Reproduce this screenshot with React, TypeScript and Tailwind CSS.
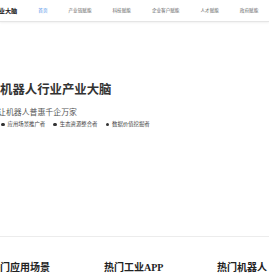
const navItems = ['首页', '产业链赋能', '科技赋能', '企业客户赋能', '人才赋能', '政府赋能'];

const roles = ['应用场景推广者', '生态资源整合者', '数据价值挖掘者'];

const sections = ['热门应用场景', '热门工业APP', '热门机器人'];

export default function App() {
  return (
    <div className="w-[269px] h-[274px] overflow-hidden bg-white font-['Noto_Sans_CJK_SC',sans-serif]">
      <header className="h-[22px] flex items-center border-b border-[#e5e5e5] shadow-[0_1px_2px_rgba(0,0,0,0.06)]">
        <div className="ml-[-26px] text-[6.2px] font-bold text-[#222] whitespace-nowrap">机器人产业大脑</div>
        <nav className="ml-[21px] flex gap-[21px] text-[4.6px] text-[#666] whitespace-nowrap">
          {navItems.map((item, i) => (
            <span key={item} className={i === 0 ? 'text-[#4a8ee8]' : ''}>
              {item}
            </span>
          ))}
        </nav>
      </header>

      <section className="h-[215px] border-b border-[#ececec] pt-[59px]">
        <h1 className="text-[12.4px] font-bold text-[#333] leading-[16px] whitespace-nowrap">机器人行业产业大脑</h1>
        <p className="mt-[10px] ml-[-2px] text-[7.9px] text-[#555] leading-[10px] whitespace-nowrap">让机器人普惠千企万家</p>
        <ul className="mt-[4px] ml-[1px] flex gap-[8px] text-[5.4px] text-[#444] leading-[7px] whitespace-nowrap">
          {roles.map((r) => (
            <li key={r} className="flex items-center gap-[3px]">
              <span className="w-[3.5px] h-[3.5px] rounded-full bg-[#333]" />
              {r}
            </li>
          ))}
        </ul>
      </section>

      <div className="ml-[-10px] mt-[25px] grid grid-cols-[114px_113px_113px] font-['Liberation_Serif','Noto_Sans_CJK_SC',serif] text-[10px] font-bold text-[#222] leading-[12px] whitespace-nowrap">
        {sections.map((s) => (
          <h2 key={s}>{s}</h2>
        ))}
      </div>
    </div>
  );
}
